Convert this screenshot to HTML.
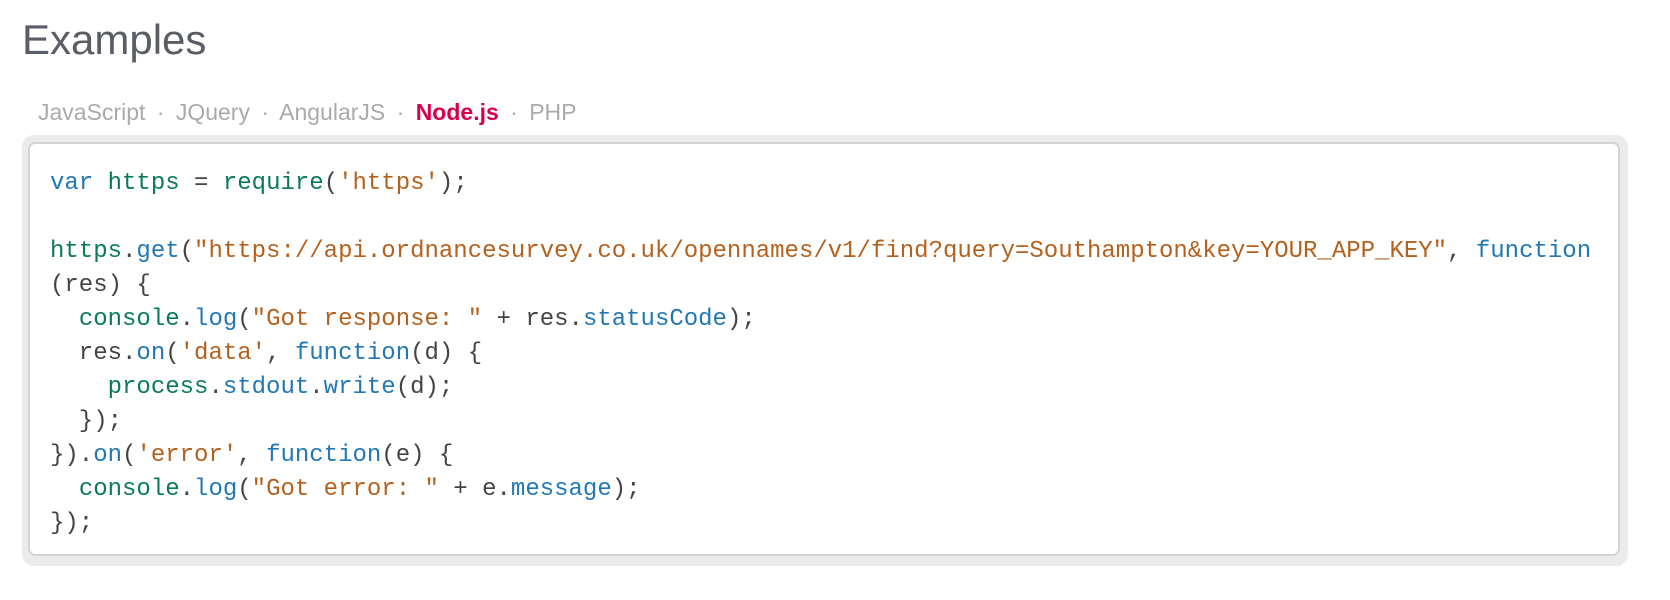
<!DOCTYPE html>
<html><head><meta charset="utf-8"><style>
body{margin:0;background:#fff;width:1670px;height:600px;overflow:hidden;font-family:"Liberation Sans",sans-serif}
h1{position:absolute;left:22px;top:16px;margin:0;font-weight:300;font-size:42px;color:#5a5d66;letter-spacing:0px}
.tabs{position:absolute;left:38px;top:99px;font-size:23px;color:#aaa;word-spacing:5px}
.tabs b{color:#d6004f;word-spacing:0}
.outer{position:absolute;left:22px;top:135px;width:1606px;height:431px;background:#ebebeb;border-radius:12px}
.inner{position:absolute;left:28px;top:142px;width:1592px;height:414px;background:#fff;border:2px solid #d4d4d4;border-radius:7px;box-sizing:border-box}
pre{position:absolute;left:50px;top:167px;margin:0;font-family:"Liberation Mono",monospace;font-size:24px;line-height:34px;color:#444}
.k{color:#2278b5}.g{color:#0a7a5e}.s{color:#b5611d}
</style></head><body>
<h1>Examples</h1>
<div class="tabs">JavaScript · JQuery · AngularJS · <b>Node.js</b> · PHP</div>
<div class="outer"></div><div class="inner"></div>
<pre><span class="k">var</span> <span class="g">https</span> = <span class="g">require</span>(<span class="s">'https'</span>);

<span class="g">https</span>.<span class="k">get</span>(<span class="s">"https://api.ordnancesurvey.co.uk/opennames/v1/find?query=Southampton&amp;key=YOUR_APP_KEY"</span>, <span class="k">function</span>
(res) {
  <span class="g">console</span>.<span class="k">log</span>(<span class="s">"Got response: "</span> + res.<span class="k">statusCode</span>);
  res.<span class="k">on</span>(<span class="s">'data'</span>, <span class="k">function</span>(d) {
    <span class="g">process</span>.<span class="k">stdout</span>.<span class="k">write</span>(d);
  });
}).<span class="k">on</span>(<span class="s">'error'</span>, <span class="k">function</span>(e) {
  <span class="g">console</span>.<span class="k">log</span>(<span class="s">"Got error: "</span> + e.<span class="k">message</span>);
});</pre>
</body></html>
